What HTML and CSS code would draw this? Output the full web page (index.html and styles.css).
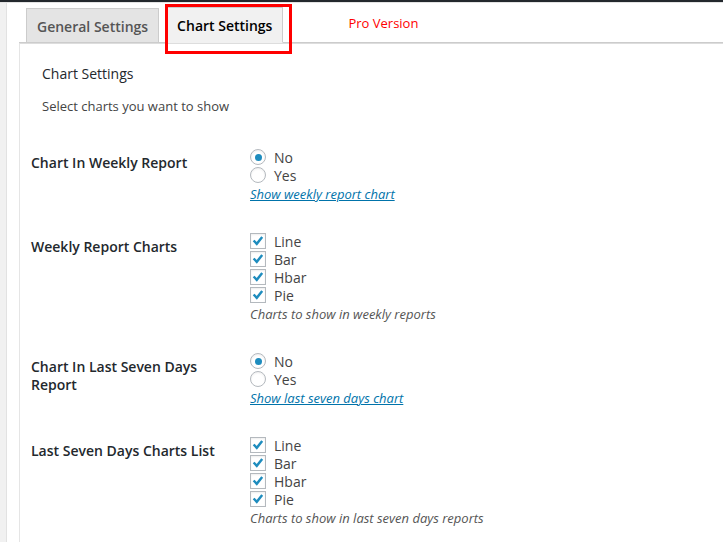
FILE: index.html
```html
<!DOCTYPE html>
<html>
<head>
<meta charset="utf-8">
<link rel="stylesheet" href="styles.css">
</head>
<body>
<div class="topbar"></div>
<div class="page">
  <div class="sidebar"></div>
  <div class="main">
    <div class="tabs">
      <span class="tab">General Settings</span>
      <span class="tab active">Chart Settings</span>
      <span class="pro">Pro Version</span>
      <span class="highlight"></span>
    </div>
    <div class="panel">
      <div class="intro">
        <div class="title">Chart Settings</div>
        <div class="subtitle">Select charts you want to show</div>
      </div>
      <div class="form">
        <div class="row">
          <div class="label">Chart In Weekly Report</div>
          <div class="field">
            <div class="opt"><span class="radio checked"></span>No</div>
            <div class="opt"><span class="radio"></span>Yes</div>
            <div class="desc"><a class="link">Show weekly report chart</a></div>
          </div>
        </div>
        <div class="row">
          <div class="label">Weekly Report Charts</div>
          <div class="field">
            <div class="opt"><span class="check"><svg viewBox="0 0 16 16"><path d="M3 7.4 L6.6 11.2 L12.8 3.4" /></svg></span>Line</div>
            <div class="opt"><span class="check"><svg viewBox="0 0 16 16"><path d="M3 7.4 L6.6 11.2 L12.8 3.4" /></svg></span>Bar</div>
            <div class="opt"><span class="check"><svg viewBox="0 0 16 16"><path d="M3 7.4 L6.6 11.2 L12.8 3.4" /></svg></span>Hbar</div>
            <div class="opt"><span class="check"><svg viewBox="0 0 16 16"><path d="M3 7.4 L6.6 11.2 L12.8 3.4" /></svg></span>Pie</div>
            <div class="desc">Charts to show in weekly reports</div>
          </div>
        </div>
        <div class="row">
          <div class="label">Chart In Last Seven Days Report</div>
          <div class="field">
            <div class="opt"><span class="radio checked"></span>No</div>
            <div class="opt"><span class="radio"></span>Yes</div>
            <div class="desc"><a class="link">Show last seven days chart</a></div>
          </div>
        </div>
        <div class="row">
          <div class="label">Last Seven Days Charts List</div>
          <div class="field">
            <div class="opt"><span class="check"><svg viewBox="0 0 16 16"><path d="M3 7.4 L6.6 11.2 L12.8 3.4" /></svg></span>Line</div>
            <div class="opt"><span class="check"><svg viewBox="0 0 16 16"><path d="M3 7.4 L6.6 11.2 L12.8 3.4" /></svg></span>Bar</div>
            <div class="opt"><span class="check"><svg viewBox="0 0 16 16"><path d="M3 7.4 L6.6 11.2 L12.8 3.4" /></svg></span>Hbar</div>
            <div class="opt"><span class="check"><svg viewBox="0 0 16 16"><path d="M3 7.4 L6.6 11.2 L12.8 3.4" /></svg></span>Pie</div>
            <div class="desc">Charts to show in last seven days reports</div>
          </div>
        </div>
      </div>
    </div>
  </div>
</div>
</body>
</html>
```
FILE: styles.css
```css
html, body {
  margin: 0;
  padding: 0;
  height: 100%;
  background: #fff;
  font-family: "Open Sans", "Liberation Sans", sans-serif;
  color: #444;
  overflow: hidden;
}
.topbar {
  height: 2px;
  background: #23282d;
  border-bottom: 1px solid #e3e3e3;
}
.page {
  display: flex;
  height: calc(100% - 3px);
}
.sidebar {
  width: 6px;
  background: #f1f1f1;
  border-right: 1px solid #e2e2e2;
}
.main {
  flex: 1;
  padding-left: 12px;
  display: flex;
  flex-direction: column;
}
.tabs {
  position: relative;
  display: flex;
  align-items: flex-end;
  height: 43px;
  padding-left: 7px;
  border-bottom: 1px solid #ccc;
}
.tab {
  display: block;
  box-sizing: border-box;
  height: 35px;
  margin-bottom: -1px;
  margin-right: 7px;
  padding: 1px 10px 0;
  line-height: 34px;
  font-size: 14px;
  font-weight: 600;
  color: #555;
  background: #e4e4e4;
  border: 1px solid #ccc;
}
.tab.active {
  color: #000;
  background: #f1f1f1;
  border-bottom-color: #f1f1f1;
  height: 36px;
}
.pro {
  align-self: flex-start;
  margin-top: 11px;
  margin-left: 58px;
  font-size: 13px;
  color: #f00;
}
.highlight {
  position: absolute;
  left: 146px;
  top: 1px;
  width: 121px;
  height: 44px;
  border: 3px solid #f00;
}
.panel {
  flex: 1;
  border-left: 1px solid #e5e5e5;
  border-top: 1px solid #ddd;
  background: #fff;
}
.intro {
  padding: 20px 0 0 22px;
}
.title {
  font-size: 14px;
  line-height: 20px;
  color: #23282d;
}
.subtitle {
  margin-top: 12px;
  font-size: 13px;
  line-height: 20px;
  color: #444;
}
.form {
  padding-left: 11px;
  margin-top: 18px;
}
.row {
  display: grid;
  grid-template-columns: 219px 1fr;
}
.label {
  padding: 20px 19px 14px 0;
  font-size: 14px;
  font-weight: 600;
  line-height: 18px;
  color: #23282d;
}
.field {
  padding: 14px 0;
}
.opt {
  display: flex;
  align-items: center;
  height: 18px;
  font-size: 14px;
  color: #444;
}
.radio, .check {
  box-sizing: border-box;
  width: 16px;
  height: 16px;
  margin-right: 8px;
  border: 1px solid #b4b9be;
  background: #fff;
  box-shadow: inset 0 1px 2px rgba(0,0,0,0.07);
  display: flex;
  align-items: center;
  justify-content: center;
}
.radio {
  border-radius: 50%;
}
.radio.checked::before {
  content: "";
  width: 7px;
  height: 7px;
  border-radius: 50%;
  background: #1e8cbe;
}
.check svg {
  width: 14px;
  height: 14px;
}
.check path {
  fill: none;
  stroke: #1e8cbe;
  stroke-width: 2.8;
}
.desc {
  font-size: 13px;
  line-height: 20px;
  font-style: italic;
  color: #555;
}
.link {
  color: #0073aa;
  text-decoration: underline;
}
```
